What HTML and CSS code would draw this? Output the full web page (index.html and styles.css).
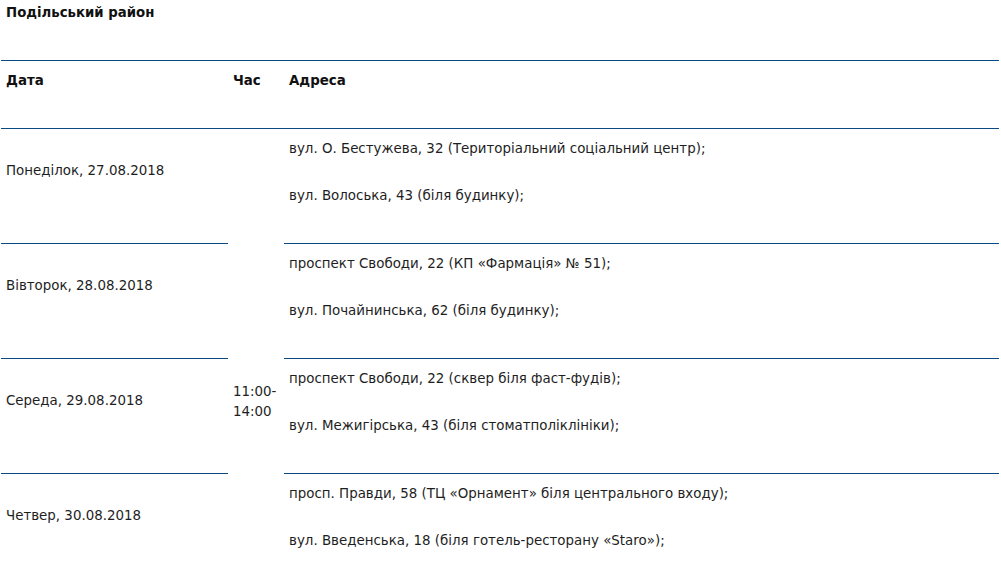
FILE: index.html
```html
<!DOCTYPE html>
<html lang="uk">
<head>
<meta charset="utf-8">
<title>Подільський район</title>
<link rel="stylesheet" href="styles.css">
</head>
<body>
<h3 class="district">Подільський район</h3>
<table class="schedule">
  <colgroup>
    <col class="col-date">
    <col class="col-time">
    <col class="col-addr">
  </colgroup>
  <thead>
    <tr>
      <th class="head">Дата</th>
      <th class="head">Час</th>
      <th class="head">Адреса</th>
    </tr>
  </thead>
  <tbody>
    <tr>
      <td class="date">Понеділок, 27.08.2018</td>
      <td class="time" rowspan="4">11:00-<br>14:00</td>
      <td class="addr"><p>вул. О. Бестужева, 32 (Територіальний соціальний центр);</p><p>вул. Волоська, 43 (біля будинку);</p></td>
    </tr>
    <tr>
      <td class="date">Вівторок, 28.08.2018</td>
      <td class="addr"><p>проспект Свободи, 22 (КП «Фармація» № 51);</p><p>вул. Почайнинська, 62 (біля будинку);</p></td>
    </tr>
    <tr>
      <td class="date">Середа, 29.08.2018</td>
      <td class="addr"><p>проспект Свободи, 22 (сквер біля фаст-фудів);</p><p>вул. Межигірська, 43 (біля стоматполіклініки);</p></td>
    </tr>
    <tr>
      <td class="date">Четвер, 30.08.2018</td>
      <td class="addr"><p>просп. Правди, 58 (ТЦ «Орнамент» біля центрального входу);</p><p>вул. Введенська, 18 (біля готель-ресторану «Staro»);</p></td>
    </tr>
  </tbody>
</table>
</body>
</html>
```
FILE: styles.css
```css
html, body {
  margin: 0;
  padding: 0;
  overflow: hidden;
  background: #fff;
}
body {
  font-family: "DejaVu Sans", "Noto Sans", sans-serif;
  font-size: 13.4px;
  line-height: 20px;
  color: #1e1e1e;
}
.district {
  margin: 0;
  padding: 3px 0 0 6px;
  height: 57px;
  font-size: 13.3px;
  font-weight: bold;
  color: #111;
}
.schedule {
  margin-left: 1px;
  width: 998px;
  border-collapse: collapse;
  table-layout: fixed;
}
.col-date { width: 227px; }
.col-time { width: 56px; }
.head {
  text-align: left;
  font-weight: bold;
  color: #111;
  padding: 10px 5px 37px;
  border-top: 1px solid #0b4a80;
  border-bottom: 1px solid #0b4a80;
  vertical-align: top;
}
.date {
  padding: 0 5px 30px;
  vertical-align: middle;
  border-top: 1px solid #0b4a80;
}
.time {
  padding: 253px 5px 0;
  vertical-align: top;
}
.addr {
  padding: 10px 5px 10px;
  vertical-align: top;
  border-top: 1px solid #0b4a80;
}
.addr p {
  margin: 0 0 27px;
}
```
